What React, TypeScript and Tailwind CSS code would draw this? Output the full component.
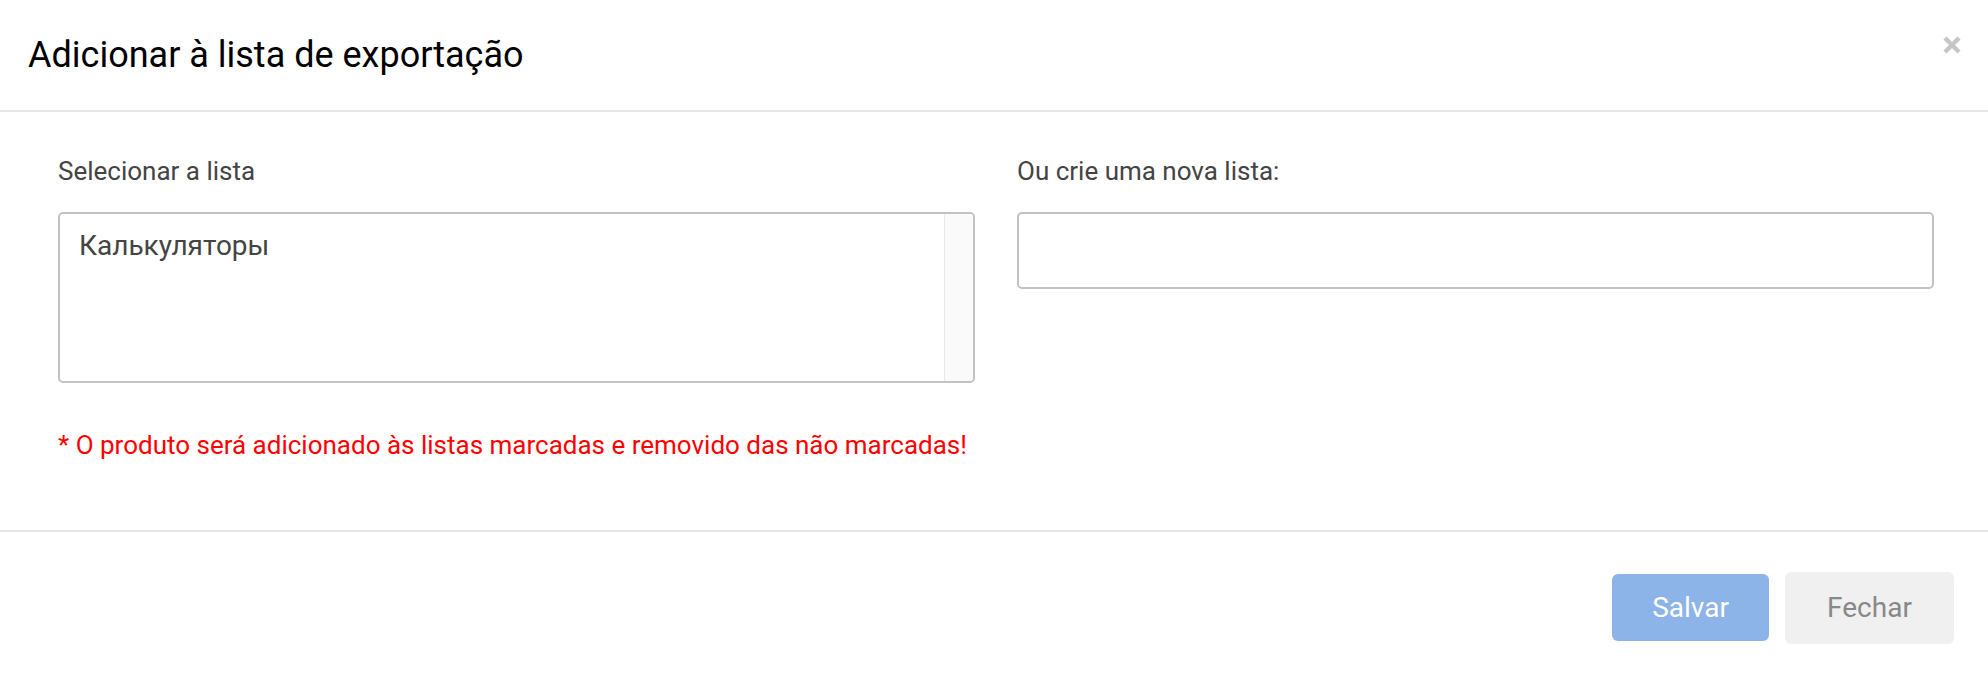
import React from 'react';

export default function App() {
  return (
    <div className="w-[1988px] h-[676px] bg-white flex flex-col font-['Roboto',sans-serif]">
      <div className="h-[112px] flex items-center justify-between border-b-2 border-[#e5e5e5] pl-[28px] pr-[26px]">
        <h3 className="text-[36px] leading-[44px] text-black">Adicionar à lista de exportação</h3>
        <button className="mb-[20px] text-[#c6c6c6]">
          <svg width="20" height="20" viewBox="0 0 20 20">
            <path d="M3 3 L17 17 M17 3 L3 17" stroke="currentColor" strokeWidth="4.4" />
          </svg>
        </button>
      </div>

      <div className="pl-[58px] pr-[54px] pt-[44px] pb-[70px] border-b-2 border-[#e5e5e5]">
        <div className="flex gap-[42px]">
          <div className="flex-1 flex flex-col">
            <label className="text-[26px] leading-[30px] text-[#444]">Selecionar a lista</label>
            <div className="mt-[26px] h-[171px] flex border-2 border-[#c2c2c2] rounded-[5px] overflow-hidden">
              <div className="flex-1 px-[19px] py-[11px] text-[28px] leading-[42px] text-[#444]">Калькуляторы</div>
              <div className="w-[29px] bg-[#fafafa] border-l border-[#e8e8e8]" />
            </div>
          </div>
          <div className="flex-1 flex flex-col">
            <label className="text-[26px] leading-[30px] text-[#444]">Ou crie uma nova lista:</label>
            <input className="mt-[26px] h-[77px] border-2 border-[#c2c2c2] rounded-[5px] px-4 outline-none" />
          </div>
        </div>
        <p className="mt-[47px] text-[26px] leading-[30px] text-[#ff0000]">
          * O produto será adicionado às listas marcadas e removido das não marcadas!
        </p>
      </div>

      <div className="flex-1 flex items-start justify-end gap-[16px] pr-[34px] pt-[40px]">
        <button className="mt-[2px] w-[157px] h-[67px] rounded-[6px] bg-[#8db4e8] text-white text-[28px]">
          Salvar
        </button>
        <button className="w-[169px] h-[72px] rounded-[6px] bg-[#f0f0f0] text-[#888] text-[28px]">
          Fechar
        </button>
      </div>
    </div>
  );
}
